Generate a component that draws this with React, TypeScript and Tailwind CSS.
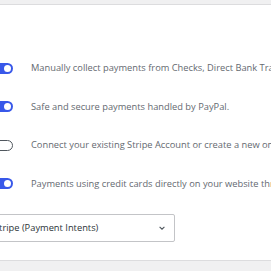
const methods = [
  { id: 1, on: true, text: 'Manually collect payments from Checks, Direct Bank Transfers and Cash on Delivery.' },
  { id: 2, on: true, text: 'Safe and secure payments handled by PayPal.' },
  { id: 3, on: false, text: 'Connect your existing Stripe Account or create a new one to accept payments.' },
  { id: 4, on: true, text: 'Payments using credit cards directly on your website through Stripe.' },
]

const Toggle = ({ on }: { on: boolean }) => {
  if (on) {
    return (
      <div className="w-[25px] h-[11px] rounded-full bg-[#3858e9] flex items-center justify-end pr-[2px] shrink-0">
        <div className="w-[7px] h-[7px] rounded-full bg-white"></div>
      </div>
    )
  }
  return (
    <div className="w-[25px] h-[11px] rounded-full border border-[#50575e] bg-white flex items-center pl-[2px] shrink-0">
      <div className="w-[6px] h-[6px] rounded-full bg-[#50575e]"></div>
    </div>
  )
}

const App = () => {
  return (
    <div className="w-[271px] h-[271px] overflow-hidden bg-white font-['Open_Sans','Noto_Sans',sans-serif] text-[#646970]">
      <div className="h-[5px] bg-[#f0f0f1] border-b border-[#dcdcde]"></div>
      <div className="pt-[44px] pb-[18px]">
        {methods.map((m) => {
          return (
            <div key={m.id} className="flex items-center h-[38.5px] -ml-[12px] whitespace-nowrap">
              <Toggle on={m.on} />
              <span className="ml-[18px] text-[9.3px]">{m.text}</span>
            </div>
          )
        })}
        <div className="mt-[11px] -ml-[12px] w-[187px] h-[28px] border border-[#c3c4c7] rounded-[2px] flex items-center justify-between pl-[5px] pr-[8px] text-[9.3px] text-[#2c3338]">
          <span>Stripe (Payment Intents)</span>
          <svg width="8" height="8" viewBox="0 0 10 10"><path d="M2 3.5 L5 6.5 L8 3.5" fill="none" stroke="#50575e" strokeWidth="1.4" /></svg>
        </div>
      </div>
      <div className="border-t border-[#dcdcde] bg-[#f0f0f1] h-[20px]"></div>
    </div>
  )
}

export default App
